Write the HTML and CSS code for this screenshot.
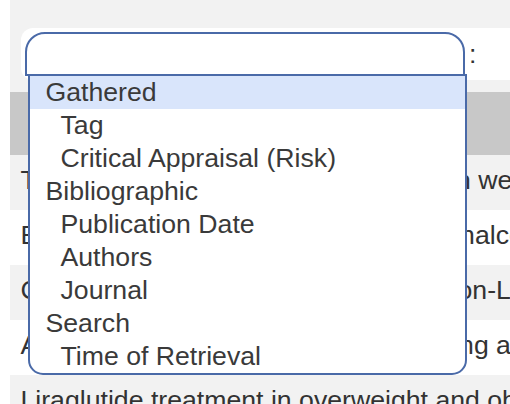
FILE: index.html
```html
<!DOCTYPE html>
<html>
<head>
<meta charset="utf-8">
<link rel="stylesheet" href="styles.css">
</head>
<body>
<div class="page">
  <div class="toolbar">
    <div class="field">
      <div class="select-wrap">
        <div class="select"></div>
        <div class="listbox">
          <div class="opt group active">Gathered</div>
          <div class="opt sub">Tag</div>
          <div class="opt sub">Critical Appraisal (Risk)</div>
          <div class="opt group">Bibliographic</div>
          <div class="opt sub">Publication Date</div>
          <div class="opt sub">Authors</div>
          <div class="opt sub">Journal</div>
          <div class="opt group">Search</div>
          <div class="opt sub">Time of Retrieval</div>
        </div>
      </div>
      <span class="colon">:</span>
    </div>
  </div>
  <div class="table">
    <div class="thead">Title</div>
    <div class="row odd">Tirzepatide vs. Semaglutide effects on weight loss in adults with obesity</div>
    <div class="row">Effects of liraglutide in people with nonalcoholic fatty liver disease</div>
    <div class="row odd">Cardiovascular Outcomes for Glucagon-Like Peptide-1 Receptor Agonists</div>
    <div class="row">Adverse Events with Tirzepatide among adults with type 2 diabetes</div>
    <div class="row odd">Liraglutide treatment in overweight and obese adolescents</div>
  </div>
</div>
</body>
</html>
```
FILE: styles.css
```css
html, body {
  margin: 0;
  padding: 0;
  background: #ffffff;
  overflow: hidden;
}
body {
  width: 510px;
  height: 404px;
  font-family: "Liberation Sans", Arial, sans-serif;
  font-size: 20pt;
  color: #333333;
}
.page {
  margin-left: 10px;
  width: 500px;
}
.toolbar {
  background: #f2f2f2;
  height: 92px;
  box-sizing: border-box;
  padding: 28px 0 0 11px;
}
.field {
  background: #ffffff;
  height: 52px;
  border-radius: 12px 0 0 12px;
  box-sizing: border-box;
  padding: 4px 0 0 4px;
  display: flex;
  align-items: flex-start;
}
.select-wrap {
  position: relative;
  width: 440px;
  height: 44px;
}
.select {
  width: 440px;
  height: 44px;
  box-sizing: border-box;
  border: 2px solid #4a6aa8;
  border-radius: 20px 20px 0 0;
  background: #ffffff;
}
.listbox {
  position: absolute;
  left: 3px;
  top: 42px;
  width: 439px;
  box-sizing: border-box;
  border: 2px solid #4a6aa8;
  border-radius: 0 0 15px 15px;
  background: #ffffff;
  z-index: 5;
}
.opt {
  height: 33px;
  line-height: 33px;
  white-space: nowrap;
  color: #3a3a3a;
}
.opt.group {
  padding-left: 15.5px;
}
.opt.sub {
  padding-left: 30.5px;
}
.opt.active {
  background: #d9e5fb;
}
.colon {
  display: block;
  margin-left: 4px;
  height: 44px;
  line-height: 44px;
  color: #333333;
}
.thead {
  height: 63px;
  background: #c8c8c8;
  color: #c8c8c8;
  text-align: center;
  line-height: 63px;
}
.row {
  height: 55px;
  box-sizing: border-box;
  padding: 10px 0 0 10.5px;
  line-height: 31px;
  white-space: nowrap;
  overflow: hidden;
  background: #ffffff;
  color: #333333;
}
.row.odd {
  background: #f2f2f2;
}
```
